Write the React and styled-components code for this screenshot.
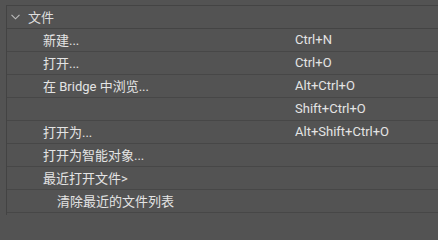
import React from "react";
import styled, { createGlobalStyle } from "styled-components";

const Global = createGlobalStyle`
  html, body { margin: 0; padding: 0; background: #535353; }
  body { font-family: Roboto, "Noto Sans CJK SC", sans-serif; }
`;

const Panel = styled.div`
  width: 438px;
  height: 215px;
  box-sizing: border-box;
  padding: 5px 0 0 6px;
  background: #535353;
  overflow: hidden;
`;

const Tree = styled.div`
  border-left: 1px solid #434343;
  height: 100%;
  display: flex;
  flex-direction: column;
`;

const Header = styled.div`
  height: 24px;
  box-sizing: border-box;
  padding: 0 0 2px 4px;
  flex: none;
  border-top: 1px solid #444444;
  border-bottom: 1px solid #444444;
  display: flex;
  align-items: center;
  gap: 8px;
  color: #dedede;
  font-size: 13px;
`;

const Row = styled.div`
  height: 23px;
  box-sizing: border-box;
  flex: none;
  border-bottom: 1px solid #474747;
  display: grid;
  grid-template-columns: 252px 1fr;
  align-items: center;
  padding: 0 0 2px ${(p) => (p.$indent ? 50 : 36)}px;
  color: #e4e4e4;
  font-size: 13px;
  white-space: nowrap;
`;

const Label = styled.span`
  grid-column: 1;
`;

const Shortcut = styled.span`
  grid-column: 2;
  margin-left: ${(p) => (p.$indent ? -14 : 0)}px;
`;

const Chevron = () => (
  <svg width="9" height="6" viewBox="0 0 9 6" style={{ marginTop: 1 }}>
    <polyline points="0.5,0.8 4.5,4.8 8.5,0.8" fill="none" stroke="#bdbdbd" strokeWidth="1.1" />
  </svg>
);

const items = [
  { label: "新建...", key: "Ctrl+N" },
  { label: "打开...", key: "Ctrl+O" },
  { label: "在 Bridge 中浏览...", key: "Alt+Ctrl+O" },
  { label: "", key: "Shift+Ctrl+O" },
  { label: "打开为...", key: "Alt+Shift+Ctrl+O" },
  { label: "打开为智能对象...", key: "" },
  { label: "最近打开文件>", key: "" },
  { label: "清除最近的文件列表", key: "", indent: true },
];

export default function App() {
  return (
    <>
      <Global />
      <Panel>
        <Tree>
          <Header>
            <Chevron />
            <span>文件</span>
          </Header>
          {items.map((it, i) => (
            <Row key={i} $indent={it.indent}>
              <Label>{it.label}</Label>
              <Shortcut $indent={it.indent}>{it.key}</Shortcut>
            </Row>
          ))}
        </Tree>
      </Panel>
    </>
  );
}
